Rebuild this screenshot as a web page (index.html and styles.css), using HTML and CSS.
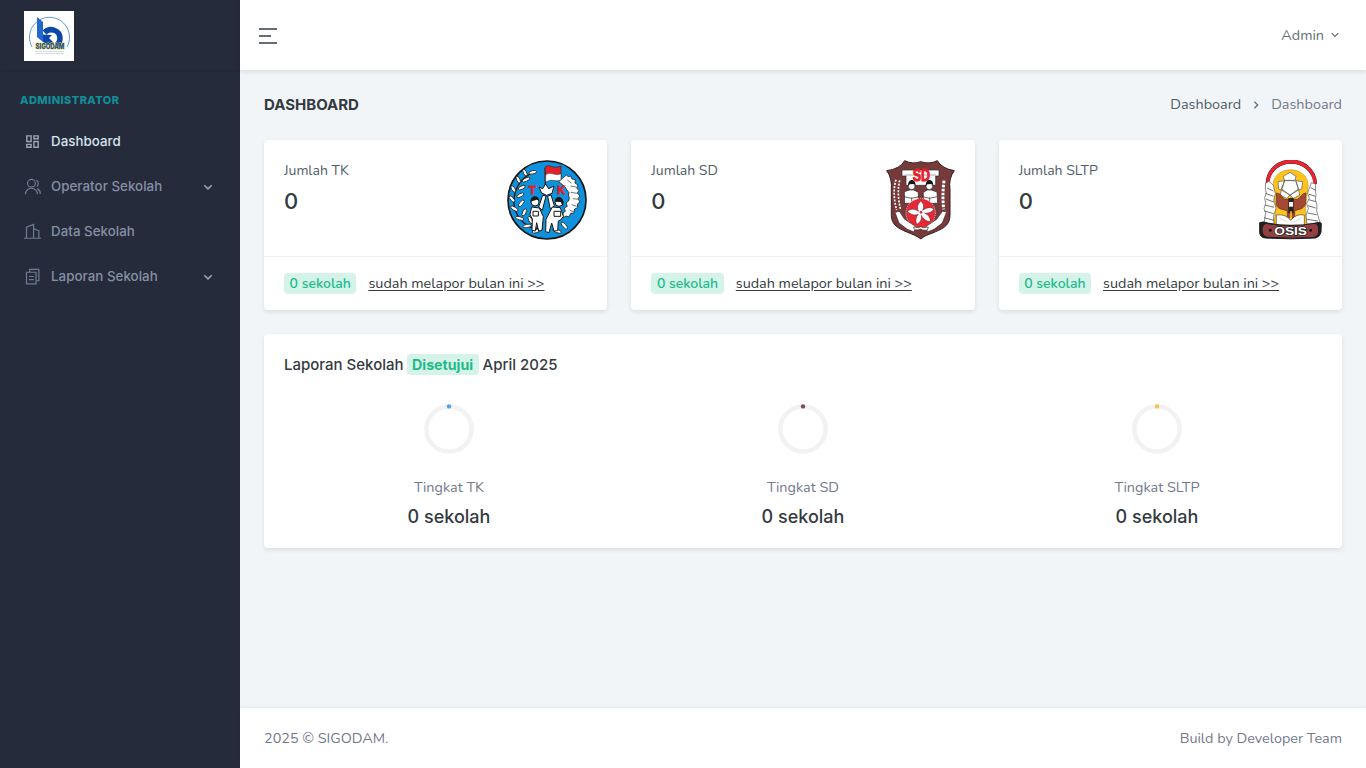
FILE: index.html
```html
<!DOCTYPE html>
<html lang="id">
<head>
<meta charset="utf-8">
<title>Dashboard | SIGODAM</title>
<link rel="stylesheet" href="styles.css">
</head>
<body>
<div class="layout">
  <aside class="sidebar">
    <div class="brand">
      <svg class="brand-logo" viewBox="0 0 50 50">
        <rect width="50" height="50" fill="#fff"/>
        <path d="M8 36A20 20 0 1 1 43 36" fill="none" stroke="#5b9bd2" stroke-width="1"/>
        <path d="M20.500 21.500C26 16 36 19 36 27.500C36 30 35 32 33 34" fill="none" stroke="#0b48a8" stroke-width="5.500"/>
        <path d="M19 31V23.500l9 .5-3 3 5 5v2h-6z" fill="#0b48a8"/>
        <path d="M13 6l6 5v20l-6-5z" fill="#2368cf"/>
        <text x="26" y="38" text-anchor="middle" textLength="29" lengthAdjust="spacingAndGlyphs" class="brand-name">SIGODAM</text>
        <path d="M11 40.500h29M12 42.500h28" stroke="#b9cbdc" stroke-width=".8" stroke-dasharray="2 .5"/>
      </svg>
    </div>
    <div class="menu-title">ADMINISTRATOR</div>
    <nav class="menu">
      <a class="menu-item active">
        <svg class="menu-icon" viewBox="0 0 24 24"><path d="M4 4h6v8H4zM14 4h6v4h-6zM14 12h6v8h-6zM4 16h6v4H4z"/></svg>
        <span>Dashboard</span>
      </a>
      <a class="menu-item">
        <svg class="menu-icon" viewBox="0 0 24 24"><circle cx="10.500" cy="7.500" r="5.500"/><path d="M2 23a8.500 8.500 0 0 1 17 0M17.500 3a5.300 5.300 0 0 1 .3 9M19 15a8.500 8.500 0 0 1 4 7.500"/></svg>
        <span>Operator Sekolah</span>
        <svg class="chevron" viewBox="0 0 10 10"><path d="M1.300 3.200L5 6.900l3.700-3.700"/></svg>
      </a>
      <a class="menu-item">
        <svg class="menu-icon" viewBox="0 0 24 24"><path d="M0 21.500h24M3.500 21V6L13.500 2v19M13.500 8l7.500 3v10"/></svg>
        <span>Data Sekolah</span>
      </a>
      <a class="menu-item">
        <svg class="menu-icon" viewBox="0 0 24 24"><path d="M8 6V2h13v16h-4M3.500 6H17v16.500H3.500zM7 12h7M7 16.500h7"/></svg>
        <span>Laporan Sekolah</span>
        <svg class="chevron" viewBox="0 0 10 10"><path d="M1.300 3.200L5 6.900l3.700-3.700"/></svg>
      </a>
    </nav>
  </aside>

  <div class="main">
    <header class="topbar">
      <svg class="burger" viewBox="0 0 18 16"><path d="M0 1h18M0 8h12M0 15h18"/></svg>
      <div class="user"><span>Admin</span><svg class="user-chevron" viewBox="0 0 10 10"><path d="M1.700 3.200L5 6.500l3.300-3.300"/></svg></div>
    </header>

    <main class="content">
      <div class="page-head">
        <h1 class="page-title">DASHBOARD</h1>
        <div class="crumbs"><span class="crumb-link">Dashboard</span><svg class="crumb-sep" viewBox="0 0 10 10"><path d="M3.400 1.700L6.700 5 3.400 8.300"/></svg><span class="crumb-now">Dashboard</span></div>
      </div>

      <section class="stats">
        <article class="card stat">
          <div class="stat-body">
            <div><p class="stat-label">Jumlah TK</p><p class="stat-value">0</p></div>
            <svg class="emblem emblem-tk" viewBox="21 24 240 240">
              <circle cx="141" cy="144" r="117" fill="#0f92de" stroke="#151515" stroke-width="5"/>
              <path d="M105 58C35 88 23 168 71 212c20 17 39 20 58 18" fill="none" stroke="#151515" stroke-width="4"/>
              <g fill="#fff" stroke="#222" stroke-width="2.500">
                <ellipse cx="98" cy="61" rx="12" ry="5" transform="rotate(-12 98 61)"/>
                <ellipse cx="75" cy="62" rx="11" ry="5" transform="rotate(65 75 62)"/>
                <ellipse cx="78" cy="83" rx="13" ry="5" transform="rotate(-25 78 83)"/>
                <ellipse cx="55" cy="83" rx="11" ry="5" transform="rotate(65 55 83)"/>
                <ellipse cx="65" cy="107" rx="12" ry="5" transform="rotate(-25 65 107)"/>
                <ellipse cx="40" cy="111" rx="11" ry="5" transform="rotate(60 40 111)"/>
                <ellipse cx="61" cy="130" rx="12" ry="5" transform="rotate(-28 61 130)"/>
                <ellipse cx="36" cy="141" rx="12" ry="5" transform="rotate(50 36 141)"/>
                <ellipse cx="64" cy="154" rx="12" ry="5" transform="rotate(-50 64 154)"/>
                <ellipse cx="43" cy="170" rx="13" ry="5" transform="rotate(32 43 170)"/>
                <ellipse cx="73" cy="181" rx="12" ry="5" transform="rotate(-65 73 181)"/>
                <ellipse cx="59" cy="199" rx="13" ry="5" transform="rotate(15 59 199)"/>
                <ellipse cx="91" cy="204" rx="12" ry="5" transform="rotate(65 91 204)"/>
                <ellipse cx="81" cy="222" rx="13" ry="5" transform="rotate(-10 81 222)"/>
                <ellipse cx="112" cy="220" rx="12" ry="5" transform="rotate(35 112 220)"/>
                <ellipse cx="109" cy="237" rx="13" ry="5" transform="rotate(-18 109 237)"/>
                <ellipse cx="171" cy="237" rx="14" ry="5" transform="rotate(20 171 237)"/>
                <ellipse cx="193" cy="221" rx="13" ry="5" transform="rotate(50 193 221)"/>
                <path d="M191 76l8-7 6 5 7-2 4 9 10 2-1 10 9 6-4 9 7 8-5 7 8 9-6 8 6 10-8 6 1 11-9 4-3 12-9 1-5 11-9-3-8 5-1-14 7-5-3-10 9-5-4-10 8-6 2-9-3-9 2-7-7-9-4-7-10-9-10-8z"/>
              </g>
              <path d="M202 84l12 10M211 102l17 3M212 121l19 3M218 140l18 2M215 158l15 5M209 174l13 6" stroke="#777" stroke-width="3"/>
              <path d="M136 47v56" stroke="#171717" stroke-width="4"/>
              <path d="M135 46c16-14 22 8 48-4v34c-21 10-29-7-47 10z" fill="#e4202b" stroke="#222" stroke-width="2"/>
              <path d="M137 69c17-13 25 5 46-4v19c-20 7-27-6-46 7z" fill="#fff" stroke="#222" stroke-width="1.500"/>
              <text x="97" y="126" class="tk-letter">T</text><text x="183" y="126" class="tk-letter">K</text>
              <g fill="#fff" stroke="#171717" stroke-width="3">
                <path d="M117 105l11 5 9-14 9 14 16-8-6 22-16 6-15-7z"/>
                <path d="M128 130l10 2-11 43-11-10zM143 132l10-3 10 32-12 11z"/>
                <circle cx="105" cy="150" r="12"/><circle cx="177" cy="151" r="12"/>
                <path d="M95 165l23 3 12 26-4 41-10 2-6-25-4 25-10-2 1-34-7-14z"/>
                <path d="M157 165l24 2 9 26-8 11-7 3-2 29-11 1-7-24-8 29-10-3 1-37z"/>
              </g>
              <path d="M91 149c1-22 26-21 27-3l-8-3zM164 149c2-20 25-17 26 0v16l-8-15z" fill="#171717"/>
              <path d="M99 178h16v14H99zM162 178h20v15h-20z" fill="#fff" stroke="#171717" stroke-width="3"/>
            </svg>
          </div>
          <div class="stat-foot"><span class="pill">0 sekolah</span><a class="report">sudah melapor bulan ini &gt;&gt;</a></div>
        </article>

        <article class="card stat">
          <div class="stat-body">
            <div><p class="stat-label">Jumlah SD</p><p class="stat-value">0</p></div>
            <svg class="emblem emblem-sd" viewBox="30 24 207 240">
              <path d="M86 26q24 12 48 3 26 9 50-3 14 24 51 30-18 24-13 56v78c0 36-31 43-52 53-22 8-26 10-35 18-12-9-27-15-45-22-21-9-44-20-44-49v-76q3-36-14-58 40-5 54-30z" fill="#763a3b" stroke="#341f20" stroke-width="3"/>
              <path d="M78 54h111v18h-10v28H90V72H78z" fill="#fff" stroke="#2a2424" stroke-width="2"/>
              <path d="M86 69h94" stroke="#777" stroke-width="2"/>
              <text x="136" y="87" text-anchor="middle" textLength="52" lengthAdjust="spacingAndGlyphs" class="sd-letter">SD</text>
              <g fill="#fff" stroke="#2a2020" stroke-width="2">
                <path d="M85 119l16-5h12l14 7v33H86zM142 121l12-7h12l17 6 2 34h-43z"/>
                <circle cx="107" cy="103" r="10"/><circle cx="160" cy="103" r="10"/>
                <path d="M84 134l22 5 23-5M140 134l21 5 22-5" fill="none"/>
              </g>
              <path d="M96 102c-1-24 24-24 23 0l-4-6-15 1zM149 102c-1-24 24-24 23 0l-4-6-15 1z" fill="#171717"/>
              <path d="M107 136v18M161 136v18" stroke="#333" stroke-width="2"/>
              <circle cx="134" cy="183" r="43" fill="#e52834"/>
              <circle cx="134" cy="183" r="44" fill="none" stroke="#f3c9cc" stroke-width="3" stroke-dasharray="3 3"/>
              <path d="M134 147c-13 15-10 22-6 31-14-9-25-7-34 0 12 12 24 13 33 8-7 10-10 20-4 31 12-8 15-16 13-27 5 11 14 18 27 19 0-13-6-20-17-26 12 2 22-3 28-12-14-8-24-3-34 4 5-12 3-21-6-28z" fill="#fff" stroke="#52242a" stroke-width="1.500"/>
              <circle cx="135" cy="181" r="4" fill="#e52834"/>
              <g fill="none" stroke="#fff" stroke-width="5" stroke-dasharray="6 4">
                <path d="M60 83c-9 29-6 62 2 91M71 85c-7 30-4 62 3 89"/>
                <path d="M204 86c-4 30-4 56-1 86" stroke-width="9" stroke-dasharray="8 4"/>
              </g>
              <g fill="#fff" stroke="#392829" stroke-width="2">
                <path d="M57 181l13-3 16 24 28 18 8 9-10 10-18-7-25-19zM212 179l-13-1-17 24-27 18-10 9 11 10 18-7 25-19z"/>
                <path d="M113 225l15 2 6-3 8 3 15-2-3 10-14-1-6-3-8 3-11-1z"/>
              </g>
            </svg>
          </div>
          <div class="stat-foot"><span class="pill">0 sekolah</span><a class="report">sudah melapor bulan ini &gt;&gt;</a></div>
        </article>

        <article class="card stat">
          <div class="stat-body">
            <div><p class="stat-label">Jumlah SLTP</p><p class="stat-value">0</p></div>
            <svg class="emblem emblem-osis" viewBox="24 24 192 240">
              <path d="M71 221l6-50-8-66C66 36 178 36 174 105l-8 66 6 50z" fill="#ffc31c" stroke="#bd9c2b" stroke-width="2"/>
              <path d="M53 96C56 7 190 7 195 96" fill="none" stroke="#303030" stroke-width="13"/>
              <path d="M53 96C56 7 190 7 195 96" fill="none" stroke="#ed2430" stroke-width="10"/>
              <path d="M62 98C67 21 179 21 186 98" fill="none" stroke="#fff" stroke-width="9"/>
              <g fill="#fff" stroke="#555" stroke-width="2">
                <path d="M47 94l10-6 13 12 6 25-5 20 7 24-8 25 2 22-30-1 5-33-5-12 5-16-3-17 5-14-3-12zM184 92l13 4-1 18 2 14-2 15 5 16-1 18 10 35-39 4-3-27 7-19-5-15 8-17-5-15z"/>
                <path d="M104 85h32l10 25-26 20-26-20zM120 61l18 12-3 13h-31l-4-13zM104 86l-20 3 2 22 9 3zM138 86l20 3-3 22-10 2zM94 114l26 15-10 10-19-9zM146 114l-26 15 10 10 19-9z"/>
              </g>
              <path d="M51 108l19 9M47 124l24 9M48 141l23 9M45 159l27 7M43 177l28 8M42 197l30 8M182 107l15 8M177 127l20 6M176 143l22 6M174 161l23 7M173 183l27 5M171 202l33 5" stroke="#555" stroke-width="2.500"/>
              <path d="M79 123c17 2 17 14 25 19h38c10-5 12-18 26-19l-2 35c-9 17-21 12-32 19v20h-22v-20c-12-7-27-2-33-19z" fill="#a44935" stroke="#5d302b" stroke-width="2"/>
              <path d="M115 138h16v46h-16z" fill="#242424"/><path d="M117 150h12v14h-12z" fill="#fff"/>
              <path d="M123 178v24" stroke="#ffc31c" stroke-width="5"/>
              <path d="M79 189q28-4 43 16 17-21 41-16v30H79z" fill="#fff" stroke="#444" stroke-width="2"/>
              <path d="M87 197l28 14M156 197l-27 14" stroke="#ccc" stroke-width="2"/>
              <path d="M29 212q11-5 24 1 68 15 140 1 17-5 21 0l-1 27q-3 14-17 17-71 5-150 0-15-1-17-16z" fill="#202020" stroke="#202020" stroke-width="3"/>
              <path d="M51 216q70 12 140 0 10-2 13 9v17q-3 12-17 13-66 3-134-1-12-1-15-15v-11q4-14 13-12z" fill="#943f40"/>
              <circle cx="61" cy="235" r="4"/><circle cx="182" cy="235" r="4"/>
              <text x="122" y="250" text-anchor="middle" textLength="98" lengthAdjust="spacingAndGlyphs" class="osis-letter">OSIS</text>
            </svg>
          </div>
          <div class="stat-foot"><span class="pill">0 sekolah</span><a class="report">sudah melapor bulan ini &gt;&gt;</a></div>
        </article>
      </section>

      <section class="card summary">
        <h2 class="summary-title">Laporan Sekolah <span class="badge">Disetujui</span> April 2025</h2>
        <div class="levels">
          <div class="level">
            <svg class="ring" viewBox="0 0 50 50"><circle cx="25" cy="25" r="22.600"/><circle class="dot-tk" cx="25" cy="2.400" r="2.200"/></svg>
            <p class="level-label">Tingkat TK</p><p class="level-value">0 sekolah</p>
          </div>
          <div class="level">
            <svg class="ring" viewBox="0 0 50 50"><circle cx="25" cy="25" r="22.600"/><circle class="dot-sd" cx="25" cy="2.400" r="2.200"/></svg>
            <p class="level-label">Tingkat SD</p><p class="level-value">0 sekolah</p>
          </div>
          <div class="level">
            <svg class="ring" viewBox="0 0 50 50"><circle cx="25" cy="25" r="22.600"/><circle class="dot-sltp" cx="25" cy="2.400" r="2.200"/></svg>
            <p class="level-label">Tingkat SLTP</p><p class="level-value">0 sekolah</p>
          </div>
        </div>
      </section>
    </main>

    <footer class="footer"><span>2025 © SIGODAM.</span><span>Build by Developer Team</span></footer>
  </div>
</div>
</body>
</html>
```
FILE: styles.css
```css
* { box-sizing: border-box; }
body { margin: 0; background: #f1f5f7; color: #505d69; font: 14.4px/21.6px Nunito, Lato, sans-serif; }
p, h1, h2 { margin: 0; }
svg { display: block; flex: none; }
.layout { display: flex; height: 768px; }
.sidebar { width: 240px; flex: none; background: #252b3b; font-family: Inter, sans-serif; }
.brand { height: 70px; padding: 11px 24px; box-shadow: 0 1px 2px rgba(0, 0, 0, .12); }
.brand-logo { width: 50px; height: 50px; }
.brand-name { font: 800 7.5px Inter, sans-serif; fill: #244f96; stroke: #e3cd39; stroke-width: .9px; paint-order: stroke; }
.menu-title { padding: 20px 20px 0; font-size: 11px; font-weight: 800; line-height: 20px; letter-spacing: .43px; color: #128e98; }
.menu { padding-top: 9px; }
.menu-item { display: flex; align-items: center; height: 45px; padding: 0 27px 0 24px; font-size: 13.3px; font-weight: 500; letter-spacing: .05px; color: #8590a5; }
.menu-item.active { color: #d7e4ec; }
.menu-icon { width: 17px; height: 17px; margin-right: 10px; fill: none; stroke: #6f7b91; stroke-width: 1.7; }
.active .menu-icon { stroke: #9aa6b5; stroke-width: 2; }
.chevron { width: 10px; height: 10px; margin-left: auto; fill: none; stroke: #9ba7b8; stroke-width: 1.5; }
.main { flex: 1; display: flex; flex-direction: column; min-width: 0; }
.topbar { height: 70px; flex: none; display: flex; align-items: center; justify-content: space-between; padding: 2px 26px 0 19px; background: #fff; box-shadow: 0 2px 4px rgba(15, 34, 58, .1); }
.burger { width: 18px; height: 16px; stroke: #636e75; stroke-width: 2; }
.user { display: flex; align-items: center; gap: 6px; color: #636e75; }
.user-chevron { width: 10px; height: 10px; margin-bottom: 2px; fill: none; stroke: #636e75; stroke-width: 1.2; }
.content { flex: 1; padding: 24px 24px 0; }
.page-head { display: flex; justify-content: space-between; height: 46px; line-height: 21px; }
.page-title { font: 700 15px/21px Inter, sans-serif; color: #343a40; }
.crumbs { display: flex; height: 21px; align-items: center; }
.crumb-link { color: #505d69; }
.crumb-now { color: #74788d; }
.crumb-sep { width: 10px; height: 10px; margin: 0 10px; fill: none; stroke: #687381; stroke-width: 1.4; }
.card { background: #fff; border-radius: 4px; box-shadow: 0 2px 4px rgba(15, 34, 58, .1); }
.stats { display: grid; grid-template-columns: repeat(3, 1fr); gap: 24px; }
.stat { height: 170px; }
.stat-body { display: flex; justify-content: space-between; height: 116px; padding: 20px; }
.stat-label { line-height: 21px; font-size: 14px; }
.stat-value { margin-top: 8px; font: 500 22px/24px Inter, sans-serif; color: #343a40; }
.emblem { height: 80px; }
.emblem-tk { width: 80px; }
.emblem-sd { width: 69px; }
.emblem-osis { width: 64px; }
.tk-letter { font: 700 34px "Liberation Sans", sans-serif; text-anchor: middle; fill: #de202b; stroke: #de202b; stroke-width: 2.5px; }
.sd-letter { font: 700 50px "Liberation Sans", sans-serif; fill: #e71f2d; stroke: #e71f2d; stroke-width: 3px; }
.osis-letter { font: 700 32px "Liberation Sans", sans-serif; fill: #fff; stroke: #202020; stroke-width: 4px; paint-order: stroke; }
.stat-foot { display: flex; align-items: center; gap: 12px; height: 54px; padding: 0 20px; border-top: 1px solid #eff2f7; }
.pill { width: 72.4px; height: 21px; border-radius: 4px; background: #d6f3e9; color: #1cbb8c; font-weight: 600; font-size: 14px; line-height: 21px; text-align: center; white-space: nowrap; }
.report { color: #343a40; text-decoration: underline; text-underline-offset: 2px; }
.summary { height: 214px; margin-top: 24px; padding: 20px; }
.summary-title { font: 500 15px/21px Inter, sans-serif; color: #343a40; }
.badge { display: inline-block; height: 21px; padding: 0 5.5px; margin-left: -1px; border-radius: 4px; background: #d6f3e9; color: #1cbb8c; font-weight: 700; font-size: 14.2px; }
.levels { display: grid; grid-template-columns: repeat(3, 330px); column-gap: 24px; margin-top: 29px; }
.level { text-align: center; }
.ring { width: 50px; height: 50px; margin: 0 auto; }
.ring circle { fill: none; stroke: #f2f2f2; stroke-width: 4.5; }
.ring .dot-tk { fill: #5aa2df; stroke: none; }
.ring .dot-sd { fill: #7f5054; stroke: none; }
.ring .dot-sltp { fill: #f2c44e; stroke: none; }
.level-label { margin-top: 23px; line-height: 21px; color: #74788d; }
.level-value { margin-top: 8px; font: 500 18px/22px Inter, sans-serif; color: #343a40; }
.footer { height: 60px; flex: none; display: flex; justify-content: space-between; align-items: center; padding: 2px 24px 0; background: #fff; box-shadow: 0 -1px 2px rgba(15, 34, 58, .06); color: #74788d; }
```
